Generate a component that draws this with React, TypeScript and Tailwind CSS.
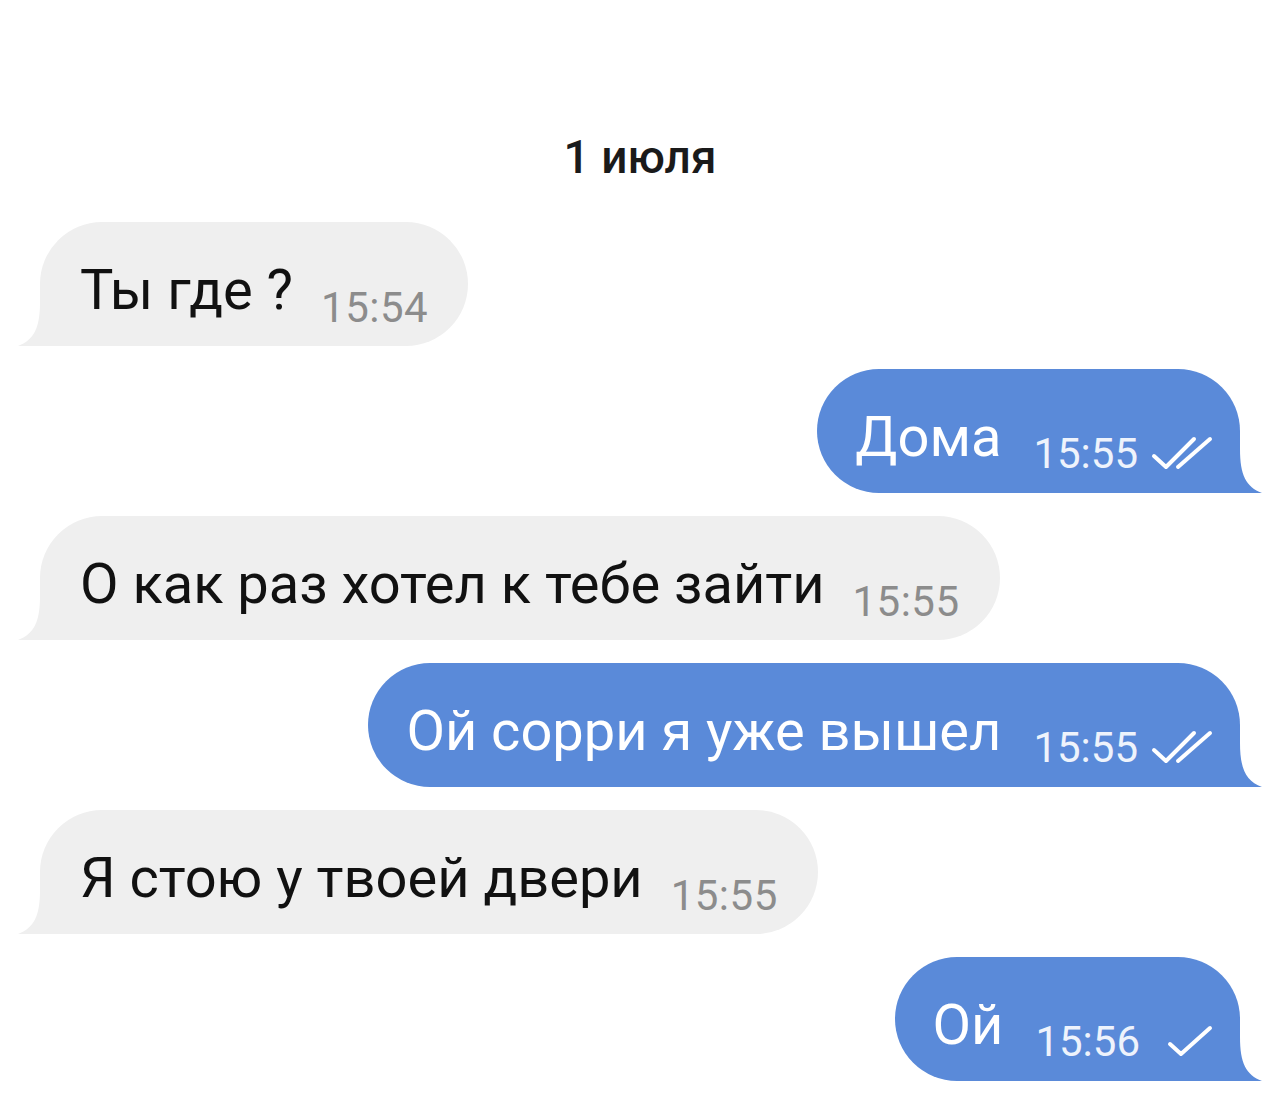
import React from "react";

type Msg = {
  text: string;
  time: string;
  out?: boolean;
  checks?: 1 | 2;
};

const messages: Msg[] = [
  { text: "Ты где ?", time: "15:54" },
  { text: "Дома", time: "15:55", out: true, checks: 2 },
  { text: "О как раз хотел к тебе зайти", time: "15:55" },
  { text: "Ой сорри я уже вышел", time: "15:55", out: true, checks: 2 },
  { text: "Я стою у твоей двери", time: "15:55" },
  { text: "Ой", time: "15:56", out: true, checks: 1 },
];

function Checks({ count }: { count: 1 | 2 }) {
  if (count === 1) {
    return (
      <svg width="48" height="34" viewBox="0 0 48 34" className="ml-[26px] mb-[23px]">
        <path d="M4 20 L15 30 L44 4" fill="none" stroke="white" strokeWidth="4" strokeLinecap="round" strokeLinejoin="round" />
      </svg>
    );
  }
  return (
    <svg width="64" height="36" viewBox="0 0 64 36" className="ml-[12px] mb-[22px]">
      <path d="M4 21 L16 32 L44 4" fill="none" stroke="white" strokeWidth="4" strokeLinecap="round" strokeLinejoin="round" />
      <path d="M28 32 L60 4" fill="none" stroke="white" strokeWidth="4" strokeLinecap="round" />
    </svg>
  );
}

function Tail({ out }: { out?: boolean }) {
  if (out) {
    return (
      <svg width="26" height="44" viewBox="0 0 26 44" className="absolute right-[-22px] bottom-0">
        <path d="M0 0 L4 0 C4 26 10 38 26 44 L0 44 Z" fill="#5a8ad9" />
      </svg>
    );
  }
  return (
    <svg width="26" height="44" viewBox="0 0 26 44" className="absolute left-[-22px] bottom-0">
      <path d="M26 0 L22 0 C22 26 16 38 0 44 L26 44 Z" fill="#efefef" />
    </svg>
  );
}

function Bubble({ m }: { m: Msg }) {
  const out = !!m.out;
  return (
    <div className={out ? "self-end mr-[40px]" : "self-start ml-[40px]"}>
      <div
        className={
          out
            ? "relative flex items-end h-[124px] pl-[38px] pr-[26px] rounded-[62px] rounded-br-none bg-[#5a8ad9] text-white"
            : "relative flex items-end h-[124px] pl-[40px] pr-[40px] rounded-[62px] rounded-bl-none bg-[#efefef] text-[#111]"
        }
      >
        <Tail out={out} />
        <span className="text-[56px] leading-none mb-[28px]">{m.text}</span>
        <span
          className={
            out
              ? "ml-[32px] mb-[18px] text-[42px] leading-none text-[#eef3fc]"
              : "ml-[28px] mb-[17px] text-[42px] leading-none tracking-[0.5px] text-[#8c8c8c]"
          }
        >
          {m.time}
        </span>
        {out && m.checks ? <Checks count={m.checks} /> : null}
      </div>
    </div>
  );
}

export default function App() {
  return (
    <div className="w-[1280px] h-[1098px] bg-white overflow-hidden font-['Roboto','Liberation_Sans',sans-serif]">
      <div className="pt-[134px] text-center text-[46px] font-medium text-[#1a1a1a] leading-none">
        1 июля
      </div>
      <div className="mt-[42px] flex flex-col gap-[23px]">
        {messages.map((m, i) => (
          <Bubble key={i} m={m} />
        ))}
      </div>
    </div>
  );
}
